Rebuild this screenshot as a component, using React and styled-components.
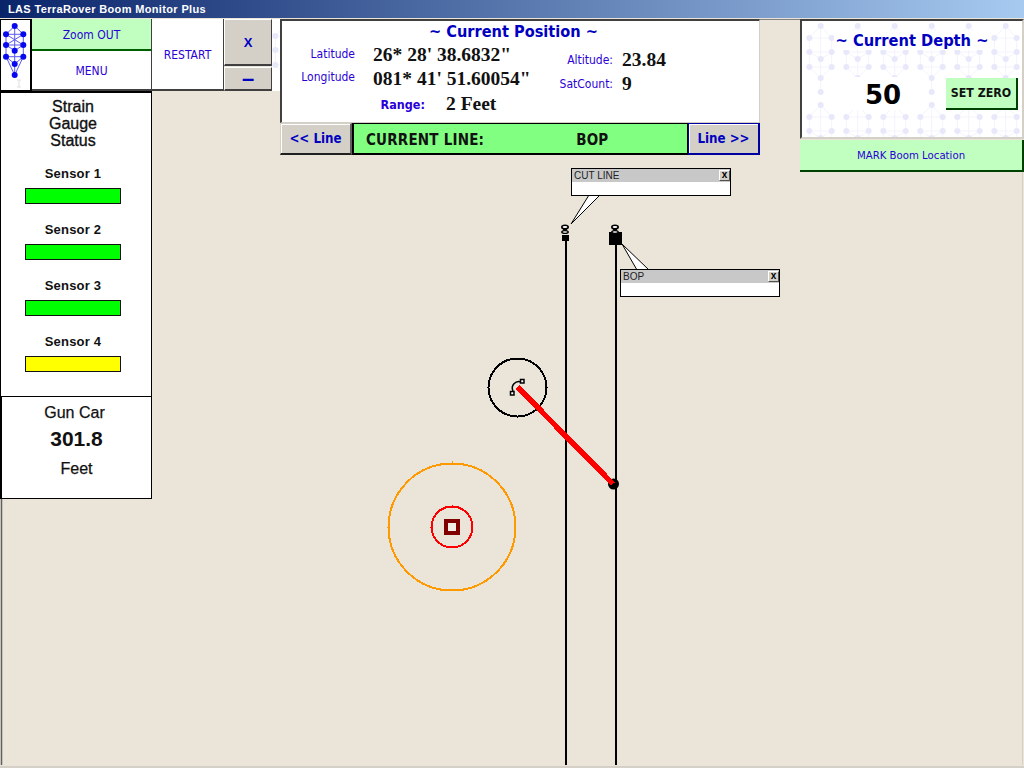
import React from "react";
import styled, { createGlobalStyle } from "styled-components";

const tileSvg = `<svg xmlns='http://www.w3.org/2000/svg' width='37' height='79'><g fill='none' stroke='#f3f3fd' stroke-width='1'><path d='M18.7 5L7.3 17M18.7 5L29.7 17M7.3 17H29.7M7.3 17V46M29.7 17V46M18.7 5V71M7.3 31H29.7M7.3 31L18.7 38L29.7 31M7.3 46H29.7M7.3 46L18.7 57L29.7 46'/></g><g fill='#e8e8fb'><circle cx='18.7' cy='5' r='3'/><circle cx='7.3' cy='17' r='3'/><circle cx='29.7' cy='17' r='3'/><circle cx='7.3' cy='31' r='3'/><circle cx='29.7' cy='31' r='3'/><circle cx='18.7' cy='38' r='3'/><circle cx='7.3' cy='46' r='3'/><circle cx='29.7' cy='46' r='3'/><circle cx='18.7' cy='57' r='3'/><circle cx='18.7' cy='71' r='3'/></g></svg>`;
const tile = `url("data:image/svg+xml,${encodeURIComponent(tileSvg)}")`;

const GlobalStyle = createGlobalStyle`
  html, body {
    margin: 0;
    padding: 0;
    width: 1024px;
    height: 768px;
    overflow: hidden;
    font-family: "DejaVu Sans", "Liberation Sans", sans-serif;
  }
`;

const Window = styled.div`
  width: 1024px;
  height: 768px;
  display: flex;
  flex-direction: column;
  background: #ebe5d9;
`;

const TitleBar = styled.div`
  height: 18px;
  padding-left: 8px;
  display: flex;
  align-items: center;
  background: linear-gradient(90deg, #0a246a, #a6caf0);
  color: white;
  font: bold 11px "Liberation Sans", sans-serif;
  letter-spacing: 0.35px;
`;

const Stage = styled.div`
  position: relative;
  flex: 1;
  display: flex;
  align-items: flex-start;
  box-sizing: border-box;
  padding-top: 1px;
  border-bottom: 2px solid #d4d0c8;
`;

const MapLayer = styled.svg`
  position: absolute;
  left: 0;
  top: 0;
  width: 1024px;
  height: 750px;
`;

const LeftColumn = styled.div`
  position: relative;
  width: 280px;
`;

const TopButtons = styled.div`
  display: flex;
  height: 72px;
`;

const LogoBox = styled.div`
  width: 32px;
  box-sizing: border-box;
  background: white;
  border: 1px solid black;
  border-right-width: 2px;
`;

const ZoomStack = styled.div`
  width: 120px;
  display: flex;
  flex-direction: column;
`;

const TextButton = styled.div`
  box-sizing: border-box;
  height: ${(p) => p.$h}px;
  width: ${(p) => (p.$w ? `${p.$w}px` : "auto")};
  padding-top: 2px;
  display: flex;
  align-items: center;
  justify-content: center;
  background: ${(p) => (p.$green ? "#c0ffc0" : "white")};
  border-bottom: 2px solid ${(p) => (p.$green ? "#006000" : "#404040")};
  border-right: 1px solid #404040;
  color: #2a00d8;
  font: 12px "DejaVu Sans Condensed", "Liberation Sans", sans-serif;
`;

const WindowStack = styled.div`
  width: 48px;
  display: flex;
  flex-direction: column;
  gap: 1px;
`;

const GreyButton = styled.div`
  box-sizing: border-box;
  height: ${(p) => p.$h}px;
  display: flex;
  align-items: center;
  justify-content: center;
  background: #d4d0c8;
  border-right: 1px solid #404040;
  border-bottom: 2px solid #404040;
  border-top: 1px solid white;
  border-left: 1px solid white;
  color: #0000c0;
  font: bold ${(p) => p.$size}px "Liberation Sans", sans-serif;
`;

const PatternStrip = styled.div`
  width: 8px;
  background-color: white;
  background-image: ${tile};
  background-position: -4px 0;
`;

const StatusPanel = styled.div`
  width: 152px;
  height: 306px;
  box-sizing: border-box;
  background: white;
  border: 1px solid black;
  border-top-width: 2px;
  display: flex;
  flex-direction: column;
  align-items: center;
  padding: 5px 6px 0 0;
  font-family: "Liberation Sans", sans-serif;
  color: #111;
`;

const StatusTitle = styled.div`
  font-size: 16px;
  font-weight: 500;
  line-height: 17px;
  text-align: center;
  margin-bottom: 17px;
  -webkit-text-stroke: 0.35px #111;
`;

const SensorRow = styled.div`
  height: 56px;
  display: flex;
  flex-direction: column;
  align-items: center;
`;

const SensorLabel = styled.div`
  font-size: 13px;
  font-weight: bold;
  line-height: 15px;
  margin-bottom: 7px;
  letter-spacing: 0.2px;
`;

const SensorBar = styled.div`
  width: 96px;
  height: 16px;
  box-sizing: border-box;
  border: 1px solid #111;
  background: ${(p) => p.$color};
`;

const GunPanel = styled.div`
  width: 152px;
  height: 103px;
  box-sizing: border-box;
  background: white;
  border: 1px solid black;
  border-left-width: 2px;
  display: flex;
  flex-direction: column;
  align-items: center;
  font-family: "Liberation Sans", sans-serif;
  color: #111;
  padding-top: 6px;
  margin-top: -1px;
`;

const GunLabel = styled.div`
  font-size: 16px;
  line-height: 19px;
  margin-right: ${(p) => p.$shift || 0}px;
  -webkit-text-stroke: 0.25px #111;
`;

const GunValue = styled.div`
  font-size: 21px;
  font-weight: bold;
  line-height: 24px;
  margin: 5px 0 8px;
`;

const CenterColumn = styled.div`
  position: relative;
  width: 480px;
  margin-right: 40px;
`;

const PositionPanel = styled.div`
  box-sizing: border-box;
  height: 104px;
  background: white;
  border: 1px solid #d4d0c8;
  border-top: 2px solid #404040;
  border-left: 2px solid #404040;
`;

const PanelHeading = styled.div`
  height: 22px;
  padding-right: 14px;
  color: #0000c0;
  font: bold 16.2px "DejaVu Sans Condensed", "Liberation Sans", sans-serif;
  text-align: center;
  line-height: 22px;
`;

const PositionBody = styled.div`
  display: flex;
`;

const FieldBlock = styled.div`
  width: ${(p) => p.$w}px;
  padding-top: ${(p) => p.$top || 0}px;
`;

const FieldRow = styled.div`
  display: flex;
  align-items: center;
  height: ${(p) => p.$h}px;
  gap: ${(p) => p.$gap}px;
`;

const FieldLabel = styled.div`
  width: ${(p) => p.$w}px;
  margin-top: ${(p) => p.$lift || 0}px;
  color: #2a00d8;
  font: ${(p) => (p.$bold ? "bold 12.5px" : "12px")} "DejaVu Sans Condensed", "Liberation Sans", sans-serif;
  text-align: right;
`;

const FieldValue = styled.div`
  color: #111;
  font: bold 19.5px "Liberation Serif", serif;
  white-space: nowrap;
`;

const LineBar = styled.div`
  display: flex;
  height: 32px;
  margin-top: 0;
`;

const LineButton = styled.div`
  box-sizing: border-box;
  width: 72px;
  display: flex;
  align-items: center;
  justify-content: center;
  background: #d4d0c8;
  color: #0000c0;
  border: 1px solid ${(p) => (p.$right ? "#0000a0" : "#d4d0c8")};
  border-bottom: 2px solid ${(p) => (p.$right ? "#0000a0" : "#202020")};
  border-right: 2px solid ${(p) => (p.$right ? "#0000a0" : "#606060")};
  box-shadow: inset 1px 1px 0 white;
  font: bold 13.2px "DejaVu Sans Condensed", "Liberation Sans", sans-serif;
`;

const CurrentLine = styled.div`
  box-sizing: border-box;
  flex: 1;
  display: flex;
  align-items: center;
  background: #80ff80;
  border: 1px solid black;
  border-left-width: 2px;
  border-bottom-width: 2px;
  padding: 2px 0 0 12px;
  color: #111;
  font: bold 15px "DejaVu Sans Condensed", "Liberation Sans", sans-serif;
  letter-spacing: 0.2px;
`;

const CurrentName = styled.span`
  margin-left: 92px;
`;

const RightColumn = styled.div`
  position: relative;
  width: 224px;
`;

const DepthPanel = styled.div`
  box-sizing: border-box;
  height: 120px;
  background-color: white;
  background-image: ${tile};
  border: 2px solid #d4d0c8;
  border-top-color: #404040;
  border-left-color: #404040;
  display: flex;
  flex-direction: column;
  align-items: center;
`;

const DepthTitle = styled.div`
  margin-top: 10px;
  padding: 0 2px;
  color: #0000c0;
  font: bold 16.3px "DejaVu Sans Condensed", "Liberation Sans", sans-serif;
  background: white;
`;

const DepthRow = styled.div`
  display: flex;
  align-items: center;
  align-self: stretch;
  margin-top: 27px;
`;

const DepthValue = styled.div`
  margin-left: 43px;
  padding: 3px 20px 0;
  color: black;
  font: bold 26px "DejaVu Sans", sans-serif;
  background: white;
`;

const ZeroButton = styled.div`
  box-sizing: border-box;
  width: 72px;
  height: 32px;
  margin-left: auto;
  margin-right: 4px;
  display: flex;
  align-items: center;
  justify-content: center;
  background: #c0ffc0;
  border-right: 2px solid #004000;
  border-bottom: 2px solid #004000;
  color: #111;
  font: bold 12.3px "DejaVu Sans Condensed", "Liberation Sans", sans-serif;
`;

const MarkButton = styled.div`
  box-sizing: border-box;
  height: 32px;
  margin-top: 1px;
  display: flex;
  align-items: center;
  justify-content: center;
  background: #c0ffc0;
  border-right: 2px solid #004000;
  border-bottom: 2px solid #004000;
  color: #2a00d8;
  font: 11.3px "DejaVu Sans Condensed", "Liberation Sans", sans-serif;
`;

const Callout = styled.div`
  position: absolute;
  left: ${(p) => p.$x}px;
  top: ${(p) => p.$y}px;
  width: 160px;
  height: 28px;
  box-sizing: border-box;
  background: white;
  border: 1px solid black;
`;

const CalloutHead = styled.div`
  height: 13px;
  background: #c8c8c8;
  display: flex;
  align-items: center;
  justify-content: space-between;
  padding-left: 2px;
  color: #222;
  font: 10px "Liberation Sans", sans-serif;
`;

const CloseBox = styled.div`
  box-sizing: border-box;
  width: 11px;
  height: 11px;
  padding-bottom: 2px;
  display: flex;
  align-items: center;
  justify-content: center;
  background: #d4d0c8;
  border-right: 1px solid #505050;
  border-bottom: 1px solid #505050;
  border-top: 1px solid white;
  border-left: 1px solid white;
  color: black;
  font: bold 10px "Liberation Sans", sans-serif;
  line-height: 8px;
`;

const logoNodes = [
  [14.7, 8], [6, 16.3], [23.3, 16.3], [6, 27], [23.3, 27], [14.7, 32.7],
  [6, 38.7], [23.3, 38.7], [14.7, 46], [14.7, 57],
];
const logoEdges = "M14.7 8L6 16.3M14.7 8L23.3 16.3M6 16.3H23.3M6 16.3V38.7M23.3 16.3V38.7M14.7 8V46M6 27H23.3M6 16.3L23.3 27M23.3 16.3L6 27M6 38.7H23.3M6 27L14.7 32.7L23.3 27M6 38.7L14.7 46L23.3 38.7M6 38.7L14.7 57L23.3 38.7M14.7 46V57";

const Logo = () => (
  <svg width="29" height="70" viewBox="1 2 29 70">
    <path d={logoEdges} fill="none" stroke="#5a5af0" strokeWidth="1" />
    {logoNodes.map(([x, y]) => (
      <circle key={`${x}-${y}`} cx={x} cy={y} r="3" fill="#0808f0" />
    ))}
    <path d="M17 62h4M19 62v7M17 69h4" fill="none" stroke="#e0e0e0" strokeWidth="1" />
  </svg>
);

const Pin = ({ x, y }) => (
  <g>
    <ellipse cx={x} cy={y} rx="3.2" ry="1.8" fill="white" stroke="black" strokeWidth="1.6" />
    <rect x={x - 2} y={y + 2} width="4" height="2" fill="black" />
    <ellipse cx={x} cy={y + 5} rx="3.2" ry="1.4" fill="white" stroke="black" strokeWidth="1.4" />
  </g>
);

const sensors = [
  { name: "Sensor 1", color: "#00ff00" },
  { name: "Sensor 2", color: "#00ff00" },
  { name: "Sensor 3", color: "#00ff00" },
  { name: "Sensor 4", color: "#ffff00" },
];

export default function App() {
  return (
    <Window>
      <GlobalStyle />
      <TitleBar>LAS TerraRover Boom Monitor Plus</TitleBar>
      <Stage>
        <MapLayer viewBox="0 18 1024 750">
          <path d="M1.5 498V765" stroke="#606060" strokeWidth="1.5" />
          <path d="M760 19.5H1024" stroke="#808080" strokeWidth="1" />
          <path d="M1022.5 171V765" stroke="#d4d0c8" strokeWidth="1" />
          <g shapeRendering="crispEdges">
            <rect x="565" y="236" width="2" height="529" fill="black" />
            <rect x="615" y="244" width="2" height="521" fill="black" />
            <rect x="609" y="232" width="13" height="13" fill="black" />
            <rect x="562" y="235" width="7" height="6" fill="black" />
            <circle cx="517.5" cy="387.5" r="29" fill="none" stroke="black" strokeWidth="2" />
            <circle cx="452" cy="527" r="63.5" fill="none" stroke="#ff9900" strokeWidth="2" />
            <circle cx="452" cy="527" r="20.5" fill="none" stroke="#ff0000" strokeWidth="2" />
            <path d="M452 461v2M387 527h2" stroke="#ff9900" strokeWidth="1" />
            <path d="M452 505v2M430 527h2" stroke="#ff0000" strokeWidth="1" />
            <rect x="446" y="521" width="12" height="12" fill="#f2eee6" stroke="#800000" strokeWidth="4" />
          </g>
          <Pin x={565} y={227} />
          <Pin x={615} y={227} />
          <polygon points="589,195 600,195 571,224" fill="white" stroke="black" strokeWidth="1" />
          <polygon points="637,270 649,270 622,244" fill="white" stroke="black" strokeWidth="1" />
          <path d="M513 391a6.5 6.5 0 0 1 8 -9" fill="none" stroke="black" strokeWidth="1.5" />
          <rect x="510.5" y="391.5" width="3.5" height="3.5" fill="white" stroke="black" strokeWidth="1.5" />
          <rect x="520.5" y="379.5" width="3.5" height="3.5" fill="white" stroke="black" strokeWidth="1.5" />
          <circle cx="613.5" cy="484" r="5.5" fill="black" />
          <path d="M517.5 387L613 484" stroke="#ff0000" strokeWidth="5.5" shapeRendering="crispEdges" />
        </MapLayer>

        <LeftColumn>
          <TopButtons>
            <LogoBox>
              <Logo />
            </LogoBox>
            <ZoomStack>
              <TextButton $h={32} $green>Zoom OUT</TextButton>
              <TextButton $h={40}>MENU</TextButton>
            </ZoomStack>
            <TextButton $h={72} $w={72}>RESTART</TextButton>
            <WindowStack>
              <GreyButton $h={47} $size={13}>X</GreyButton>
              <GreyButton $h={24} $size={22}>–</GreyButton>
            </WindowStack>
            <PatternStrip />
          </TopButtons>
          <StatusPanel>
            <StatusTitle>
              Strain
              <br />
              Gauge
              <br />
              Status
            </StatusTitle>
            {sensors.map((s) => (
              <SensorRow key={s.name}>
                <SensorLabel>{s.name}</SensorLabel>
                <SensorBar $color={s.color} />
              </SensorRow>
            ))}
          </StatusPanel>
          <GunPanel>
            <GunLabel $shift={4}>Gun Car</GunLabel>
            <GunValue>301.8</GunValue>
            <GunLabel>Feet</GunLabel>
          </GunPanel>
        </LeftColumn>

        <CenterColumn>
          <PositionPanel>
            <PanelHeading>~ Current Position ~</PanelHeading>
            <PositionBody>
              <FieldBlock $w={258}>
                <FieldRow $h={24} $gap={18}>
                  <FieldLabel $w={73} $lift={-2}>Latitude</FieldLabel>
                  <FieldValue>26* 28' 38.6832"</FieldValue>
                </FieldRow>
                <FieldRow $h={23} $gap={18}>
                  <FieldLabel $w={73} $lift={-3}>Longitude</FieldLabel>
                  <FieldValue>081* 41' 51.60054"</FieldValue>
                </FieldRow>
                <FieldRow $h={28} $gap={21}>
                  <FieldLabel $w={143} $bold>Range:</FieldLabel>
                  <FieldValue>2 Feet</FieldValue>
                </FieldRow>
              </FieldBlock>
              <FieldBlock $w={200} $top={5}>
                <FieldRow $h={24} $gap={9}>
                  <FieldLabel $w={73}>Altitude:</FieldLabel>
                  <FieldValue>23.84</FieldValue>
                </FieldRow>
                <FieldRow $h={24} $gap={9}>
                  <FieldLabel $w={73}>SatCount:</FieldLabel>
                  <FieldValue>9</FieldValue>
                </FieldRow>
              </FieldBlock>
            </PositionBody>
          </PositionPanel>
          <LineBar>
            <LineButton>&lt;&lt; Line</LineButton>
            <CurrentLine>
              CURRENT LINE:
              <CurrentName>BOP</CurrentName>
            </CurrentLine>
            <LineButton $right>Line &gt;&gt;</LineButton>
          </LineBar>
        </CenterColumn>

        <RightColumn>
          <DepthPanel>
            <DepthTitle>~ Current Depth ~</DepthTitle>
            <DepthRow>
              <DepthValue>50</DepthValue>
              <ZeroButton>SET ZERO</ZeroButton>
            </DepthRow>
          </DepthPanel>
          <MarkButton>MARK Boom Location</MarkButton>
        </RightColumn>

        <Callout $x={571} $y={150}>
          <CalloutHead>
            CUT LINE
            <CloseBox>x</CloseBox>
          </CalloutHead>
        </Callout>
        <Callout $x={620} $y={251}>
          <CalloutHead>
            BOP
            <CloseBox>x</CloseBox>
          </CalloutHead>
        </Callout>
      </Stage>
    </Window>
  );
}
